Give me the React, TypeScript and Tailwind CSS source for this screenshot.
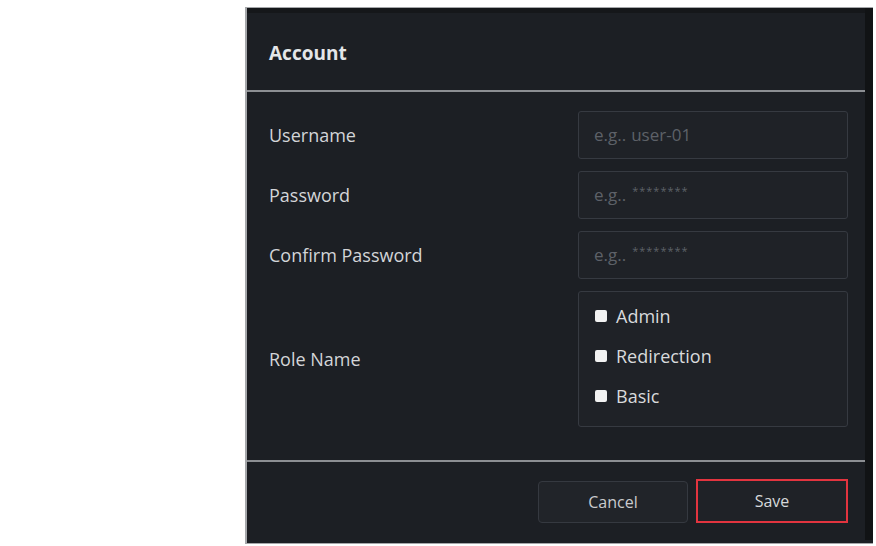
import React from "react";

const roles = ["Admin", "Redirection", "Basic"];

const fields = [
  { label: "Username", hint: "user-01", masked: false },
  { label: "Password", hint: "********", masked: true },
  { label: "Confirm Password", hint: "********", masked: true },
];

const FieldRow = ({ label, hint, masked }: { label: string; hint: string; masked: boolean }) => (
  <div className="flex items-center h-12">
    <div className="flex-1 text-[18px] text-[#d3d5d8]">{label}</div>
    <div className="w-[270px] h-12 rounded-[3px] border border-[#363a41] bg-[#1f2227] flex items-center px-[15px]">
      <span className="text-[17px] text-[#5d6168]">e.g..</span>
      {masked ? (
        <span className="ml-[6px] text-[11px] tracking-[1px] text-[#5d6168] -translate-y-[4px]">{hint}</span>
      ) : (
        <span className="ml-[5px] text-[17px] text-[#5d6168]">{hint}</span>
      )}
    </div>
  </div>
);

export default function App() {
  return (
    <div className="w-[876px] h-[546px] bg-white overflow-hidden" style={{ fontFamily: '"Open Sans", "Noto Sans", sans-serif' }}>
      <div className="ml-[245px] mt-[7px] w-[628px] h-[537px] border-l-2 border-t border-b border-[#a5a7aa] bg-[#1c1f24] flex flex-col">
        <div className="flex">
          <div className="flex-1 flex flex-col">
            {/* header */}
            <div className="h-[84px] border-b-2 border-[#8c8f93] border-t-[5px] border-t-[#15171a] flex items-center pl-[22px] pt-[4px]">
              <h2 className="text-[19px] font-bold text-[#e4e6e8]">Account</h2>
            </div>

            {/* body */}
            <div className="pl-[22px] pr-[17px] pt-[19px] pb-[33px] flex flex-col gap-3">
              {fields.map((f) => (
                <FieldRow key={f.label} label={f.label} hint={f.hint} masked={f.masked} />
              ))}
              <div className="flex items-center">
                <div className="flex-1 text-[18px] text-[#d3d5d8]">Role Name</div>
                <div className="w-[270px] h-[136px] rounded-[3px] border border-[#363a41] bg-[#1f2227] pt-[4px] pl-[16px]">
                  {roles.map((r) => (
                    <label key={r} className="h-10 flex items-center gap-[9px]">
                      <span className="w-3 h-3 bg-[#f2f2f2] rounded-[2px]" />
                      <span className="text-[18px] text-[#d8dadc]">{r}</span>
                    </label>
                  ))}
                </div>
              </div>
            </div>

            {/* footer */}
            <div className="border-t-2 border-[#8c8f93] h-[80px] flex items-center justify-end gap-2 pr-[17px]">
              <button className="w-[150px] h-[42px] mt-[2px] rounded-[4px] border border-[#353940] bg-[#212429] text-[16px] font-medium text-[#c9cbce]">
                Cancel
              </button>
              <button className="w-[152px] h-[44px] border-2 border-[#e2343f] bg-[#1f2227] text-[16px] font-medium text-[#d6d8da]">
                Save
              </button>
            </div>
          </div>
          <div className="w-[8px] bg-[#111315]" />
        </div>
      </div>
    </div>
  );
}
